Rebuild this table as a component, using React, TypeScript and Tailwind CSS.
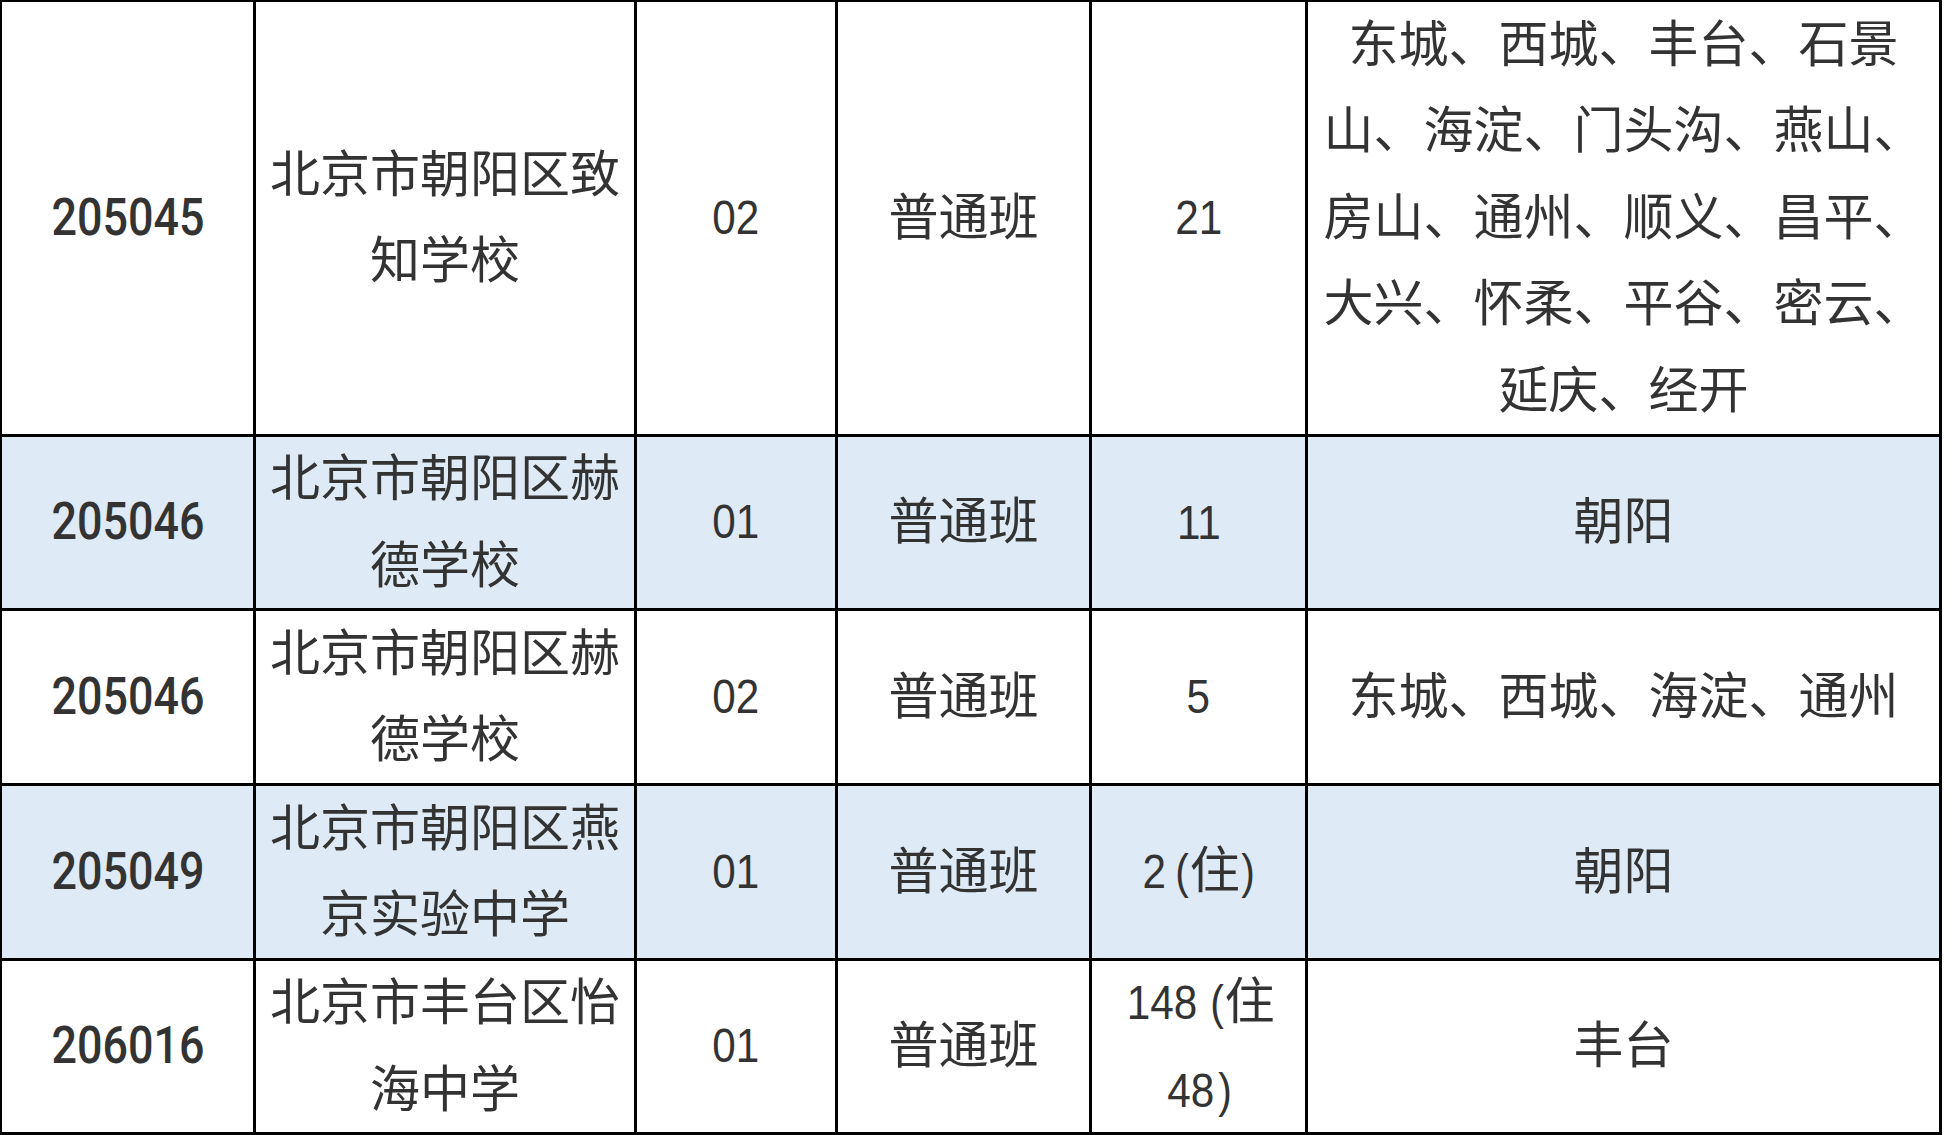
import React from 'react';

type Row = {
  code: string;
  name: string[];
  cls: string;
  type: string;
  num: string[];
  area: string[];
  blue: boolean;
};

const rows: Row[] = [
  {
    code: '205045',
    name: ['北京市朝阳区致', '知学校'],
    cls: '02',
    type: '普通班',
    num: ['21'],
    area: [
      '东城、西城、丰台、石景',
      '山、海淀、门头沟、燕山、',
      '房山、通州、顺义、昌平、',
      '大兴、怀柔、平谷、密云、',
      '延庆、经开',
    ],
    blue: false,
  },
  {
    code: '205046',
    name: ['北京市朝阳区赫', '德学校'],
    cls: '01',
    type: '普通班',
    num: ['11'],
    area: ['朝阳'],
    blue: true,
  },
  {
    code: '205046',
    name: ['北京市朝阳区赫', '德学校'],
    cls: '02',
    type: '普通班',
    num: ['5'],
    area: ['东城、西城、海淀、通州'],
    blue: false,
  },
  {
    code: '205049',
    name: ['北京市朝阳区燕', '京实验中学'],
    cls: '01',
    type: '普通班',
    num: ['2(住)'],
    area: ['朝阳'],
    blue: true,
  },
  {
    code: '206016',
    name: ['北京市丰台区怡', '海中学'],
    cls: '01',
    type: '普通班',
    num: ['148(住', '48)'],
    area: ['丰台'],
    blue: false,
  },
];

// digits and brackets use a slightly condensed latin face, CJK stays full width
function Mixed({ text }: { text: string }) {
  const parts = text.split(/([0-9]+|[()])/).filter(Boolean);
  return (
    <>
      {parts.map((p, i) => {
        if (/^[0-9]+$/.test(p)) {
          return (
            <span key={i} className="inline-block scale-x-[0.88] text-[48px]">
              {p}
            </span>
          );
        }
        if (p === '(' || p === ')') {
          return (
            <span key={i} className={'inline-block scale-x-[0.85] text-[48px] ' + (p === '(' ? 'ml-[6px]' : '')}>
              {p}
            </span>
          );
        }
        return <span key={i}>{p}</span>;
      })}
    </>
  );
}

function Cell({ blue, children }: { blue: boolean; children: React.ReactNode }) {
  return (
    <div
      className={
        'flex flex-col items-center justify-center text-center text-[50px] leading-[86.5px] ' +
        (blue ? 'bg-[#deeaf6]' : 'bg-white')
      }
    >
      {children}
    </div>
  );
}

export default function App() {
  return (
    <div className="min-h-screen w-full bg-white">
      <div className="grid w-[1942px] grid-cols-[251px_378px_198px_251px_213px_631px] grid-rows-[432px_171px_172px_172px_171px] gap-[3px] bg-black pt-[2px] pl-[2px] pr-[3px] pb-[3px] font-['Liberation_Sans','Noto_Sans_CJK_SC',sans-serif] text-[#333333]">
        {rows.map((r, idx) => (
          <React.Fragment key={idx}>
            <Cell blue={r.blue}>
              <span className="inline-block scale-x-[0.88] font-['Roboto','Liberation_Sans',sans-serif] text-[51px] font-medium">
                {r.code}
              </span>
            </Cell>
            <Cell blue={r.blue}>
              {r.name.map((l) => (
                <div key={l} className="whitespace-nowrap">
                  {l}
                </div>
              ))}
            </Cell>
            <Cell blue={r.blue}>
              <span className="inline-block scale-x-[0.88] text-[48px]">{r.cls}</span>
            </Cell>
            <Cell blue={r.blue}>
              <div className="whitespace-nowrap">{r.type}</div>
            </Cell>
            <Cell blue={r.blue}>
              {r.num.map((l) => (
                <div key={l} className="whitespace-nowrap">
                  <Mixed text={l} />
                </div>
              ))}
            </Cell>
            <Cell blue={r.blue}>
              {r.area.map((l) => (
                <div key={l} className="whitespace-nowrap">
                  {l}
                </div>
              ))}
            </Cell>
          </React.Fragment>
        ))}
      </div>
    </div>
  );
}
